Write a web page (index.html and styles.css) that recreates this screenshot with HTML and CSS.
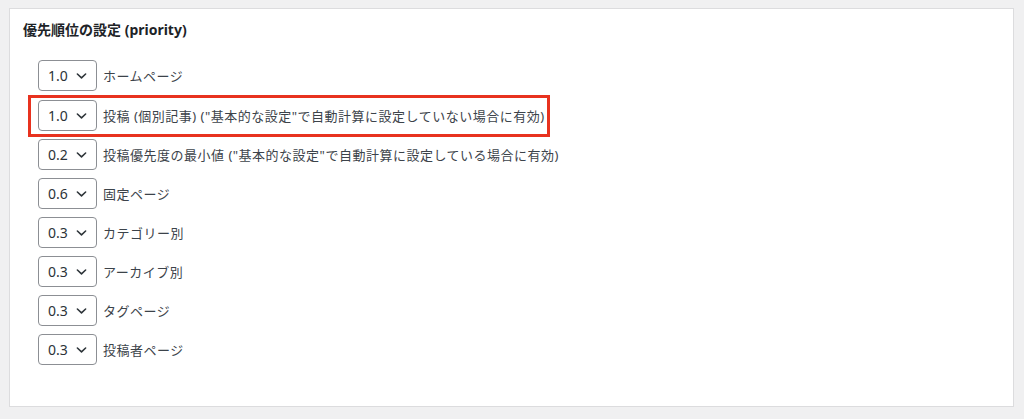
FILE: index.html
```html
<!DOCTYPE html>
<html lang="ja">
<head>
    <meta charset="UTF-8">
    <meta name="viewport" content="width=device-width, initial-scale=1.0">
    <title>優先順位の設定</title>
    <link rel="stylesheet" href="styles.css">
</head>
<body>
    <div class="panel">
        <h3 class="panel-title">優先順位の設定 (priority)</h3>

        <ul class="priority-list">
            <li class="priority-row">
                <div class="select"><span>1.0</span><svg class="chevron" viewBox="0 0 12 8"><path d="M1.5 1.8 L6 6 L10.5 1.8"/></svg></div>
                <span class="label">ホームページ</span>
            </li>
            <li class="priority-row highlight">
                <div class="select"><span>1.0</span><svg class="chevron" viewBox="0 0 12 8"><path d="M1.5 1.8 L6 6 L10.5 1.8"/></svg></div>
                <span class="label">投稿 (個別記事) ("基本的な設定"で自動計算に設定していない場合に有効)</span>
            </li>
            <li class="priority-row">
                <div class="select"><span>0.2</span><svg class="chevron" viewBox="0 0 12 8"><path d="M1.5 1.8 L6 6 L10.5 1.8"/></svg></div>
                <span class="label">投稿優先度の最小値 ("基本的な設定"で自動計算に設定している場合に有効)</span>
            </li>
            <li class="priority-row">
                <div class="select"><span>0.6</span><svg class="chevron" viewBox="0 0 12 8"><path d="M1.5 1.8 L6 6 L10.5 1.8"/></svg></div>
                <span class="label">固定ページ</span>
            </li>
            <li class="priority-row">
                <div class="select"><span>0.3</span><svg class="chevron" viewBox="0 0 12 8"><path d="M1.5 1.8 L6 6 L10.5 1.8"/></svg></div>
                <span class="label">カテゴリー別</span>
            </li>
            <li class="priority-row">
                <div class="select"><span>0.3</span><svg class="chevron" viewBox="0 0 12 8"><path d="M1.5 1.8 L6 6 L10.5 1.8"/></svg></div>
                <span class="label">アーカイブ別</span>
            </li>
            <li class="priority-row">
                <div class="select"><span>0.3</span><svg class="chevron" viewBox="0 0 12 8"><path d="M1.5 1.8 L6 6 L10.5 1.8"/></svg></div>
                <span class="label">タグページ</span>
            </li>
            <li class="priority-row">
                <div class="select"><span>0.3</span><svg class="chevron" viewBox="0 0 12 8"><path d="M1.5 1.8 L6 6 L10.5 1.8"/></svg></div>
                <span class="label">投稿者ページ</span>
            </li>
        </ul>
    </div>
</body>
</html>
```

FILE: styles.css
```css
body {
    margin: 0;
    padding: 8px 10px 12px 9px;
    background: #f0f0f1;
    font-family: "Noto Sans", "Noto Sans CJK JP", sans-serif;
    color: #3c434a;
}

.panel {
    background: #fff;
    border: 1px solid #dcdcde;
    height: 399px;
    box-sizing: border-box;
    padding: 11px 13px;
}

.panel-title {
    margin: 0;
    font-size: 14px;
    font-weight: 700;
    line-height: 20px;
    color: #1d2327;
}

.priority-list {
    list-style: none;
    margin: 20px 0 0;
    padding: 0 0 0 15px;
    display: flex;
    flex-direction: column;
    gap: 8px;
}

.priority-row {
    display: flex;
    align-items: center;
    gap: 6px;
    position: relative;
    width: max-content;
}

.priority-row.highlight {
    margin-top: 1px;
}

/* red annotation frame */
.priority-row.highlight::before {
    content: "";
    position: absolute;
    top: -5px;
    bottom: -6px;
    left: -10px;
    right: -5px;
    border: 3px solid #e8321f;
}

.select {
    width: 59px;
    height: 31px;
    box-sizing: border-box;
    border: 1px solid #8c8f94;
    border-radius: 4px;
    display: flex;
    align-items: center;
    justify-content: space-between;
    padding: 0 9px 0 9px;
    font-size: 14px;
    color: #2c3338;
    background: #fff;
}

.chevron {
    width: 11px;
    height: 8px;
    fill: none;
    stroke: #2c3338;
    stroke-width: 1.7;
    stroke-linecap: round;
    stroke-linejoin: round;
}

.label {
    font-size: 13px;
    line-height: 20px;
    letter-spacing: 0.5px;
    color: #3c434a;
}
```
